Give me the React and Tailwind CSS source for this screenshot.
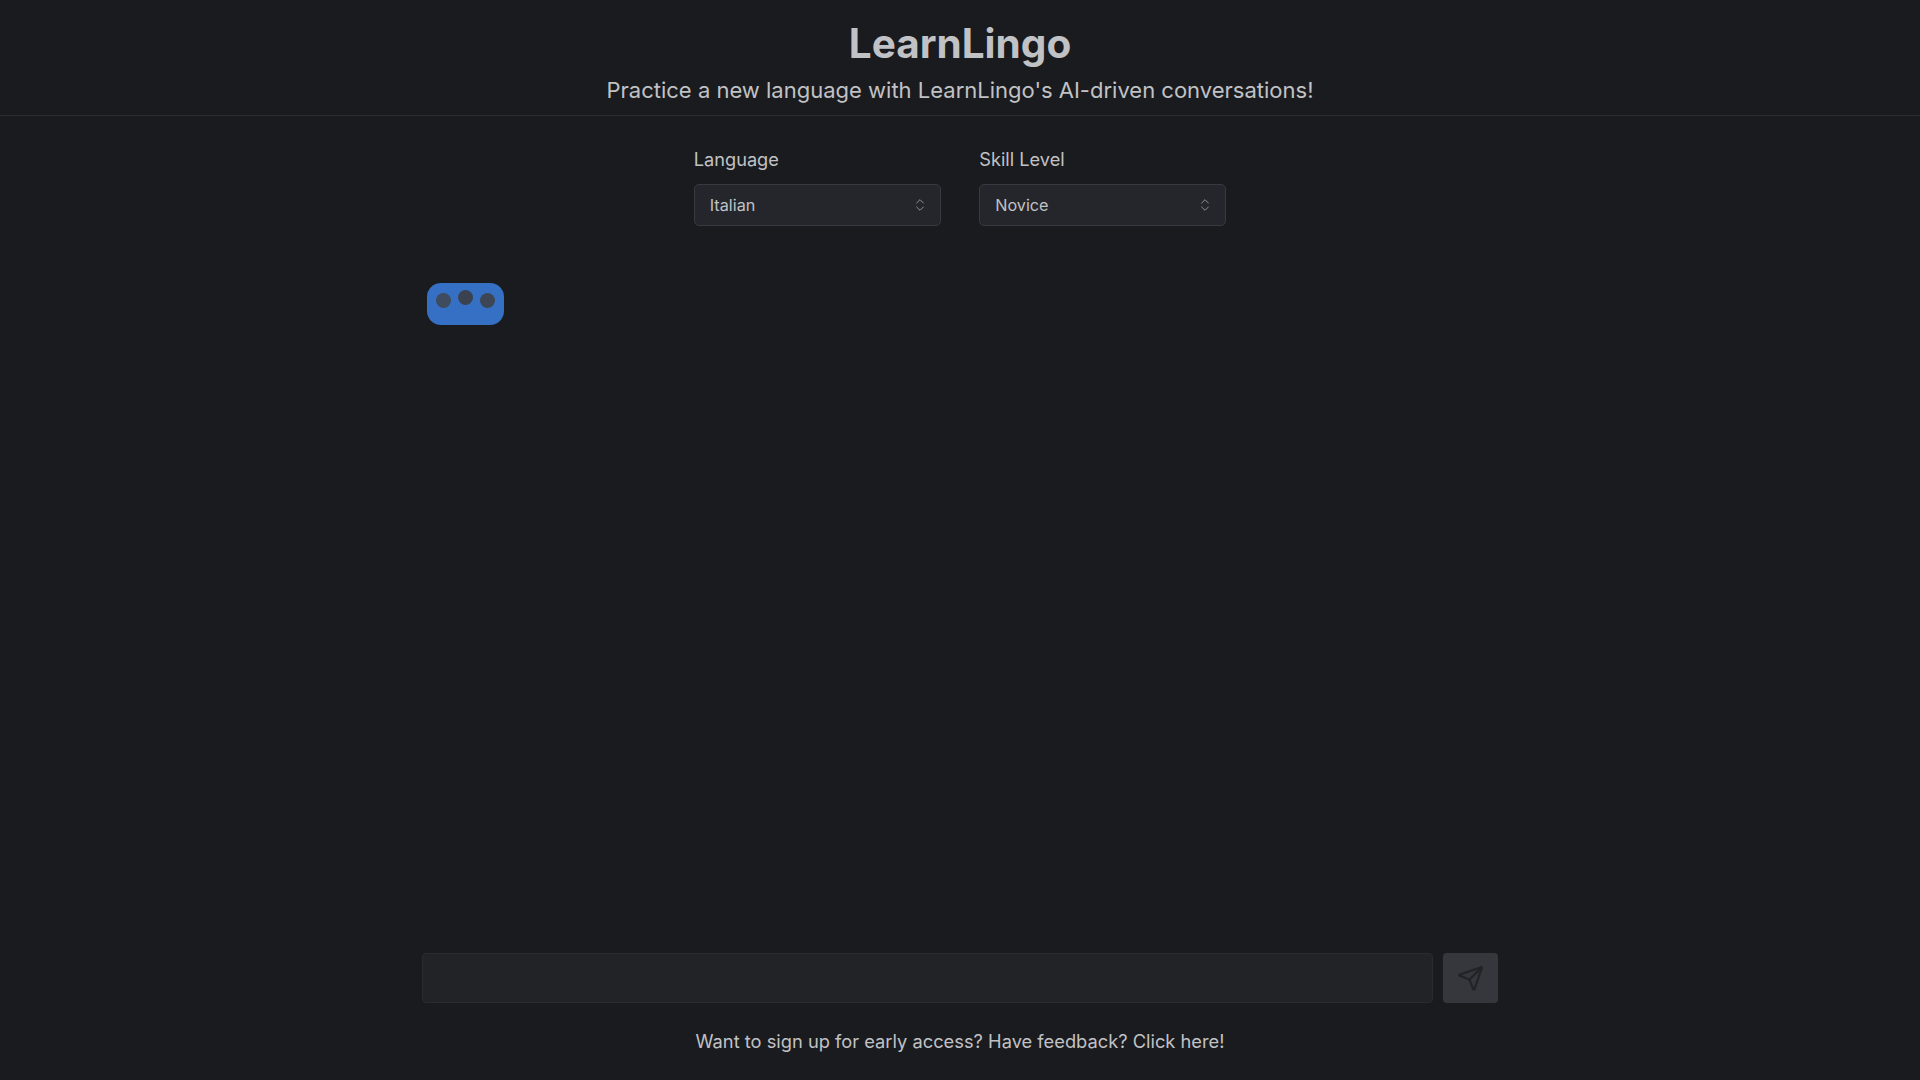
import React, { useState } from 'react';
import { ChevronsUpDown, Send } from 'lucide-react';

function SelectField({ label, value, options, onChange }) {
  return (
    <div className="w-[247px]">
      <label className="block text-[18.2px] leading-[24px] text-[#c1c2c5] mb-[13px]">{label}</label>
      <div className="relative">
        <select
          value={value}
          onChange={(e) => onChange(e.target.value)}
          className="block w-full h-[42px] appearance-none rounded-[5px] border border-[#373a40] bg-[#25262b] pl-[15px] pr-8 text-[16.2px] text-[#c1c2c5] outline-none"
        >
          {options.map(option => (
            <option key={option}>{option}</option>
          ))}
        </select>
        <ChevronsUpDown size={16} strokeWidth={1.5} className="absolute right-[13px] top-[13px] text-[#909296] pointer-events-none" />
      </div>
    </div>
  );
}

export default function App() {
  const [language, setLanguage] = useState('Italian');
  const [level, setLevel] = useState('Novice');
  const [message, setMessage] = useState('');

  return (
    <div className="h-screen flex flex-col bg-[#1a1b1e] text-[#c1c2c5] font-['Inter',sans-serif]">
      <header className="h-[116px] shrink-0 border-b border-[#2c2e33] text-center pt-[19px]">
        <h1 className="text-[40.5px] leading-[50px] font-bold">LearnLingo</h1>
        <p className="text-[22px] leading-[30px] mt-[6px]">Practice a new language with LearnLingo's AI-driven conversations!</p>
      </header>

      <div className="flex justify-center gap-[38.5px] pt-[31px] shrink-0">
        <SelectField label="Language" value={language} options={['Italian', 'Spanish', 'French', 'German']} onChange={setLanguage} />
        <SelectField label="Skill Level" value={level} options={['Novice', 'Intermediate', 'Advanced']} onChange={setLevel} />
      </div>

      <main className="flex-1 w-[1076px] mx-auto pt-[57px]">
        <div className="ml-[5px] w-[77px] h-[42px] rounded-[14px] bg-[#3570c4] flex justify-center gap-[7px] pt-[9px]">
          <span className="w-[15px] h-[15px] mt-[1px] rounded-full bg-[#3f4b5e]" />
          <span className="w-[15px] h-[15px] -mt-[2px] rounded-full bg-[#3a4250]" />
          <span className="w-[15px] h-[15px] mt-[1px] rounded-full bg-[#3d4655]" />
        </div>
      </main>

      <div className="w-[1076px] mx-auto flex gap-[10px] shrink-0">
        <input
          value={message}
          onChange={(e) => setMessage(e.target.value)}
          className="flex-1 h-[50px] rounded-[4px] border border-[#2a2b30] bg-[#222327] px-3 outline-none"
        />
        <button className="w-[55px] h-[50px] rounded-[4px] bg-[#36373c] flex items-center justify-center text-[#222327]">
          <Send size={27} strokeWidth={2} />
        </button>
      </div>

      <footer className="h-[77px] shrink-0 text-center text-[18.3px] leading-[26px] pt-[25px]">
        Want to sign up for early access? Have feedback? Click here!
      </footer>
    </div>
  );
}
